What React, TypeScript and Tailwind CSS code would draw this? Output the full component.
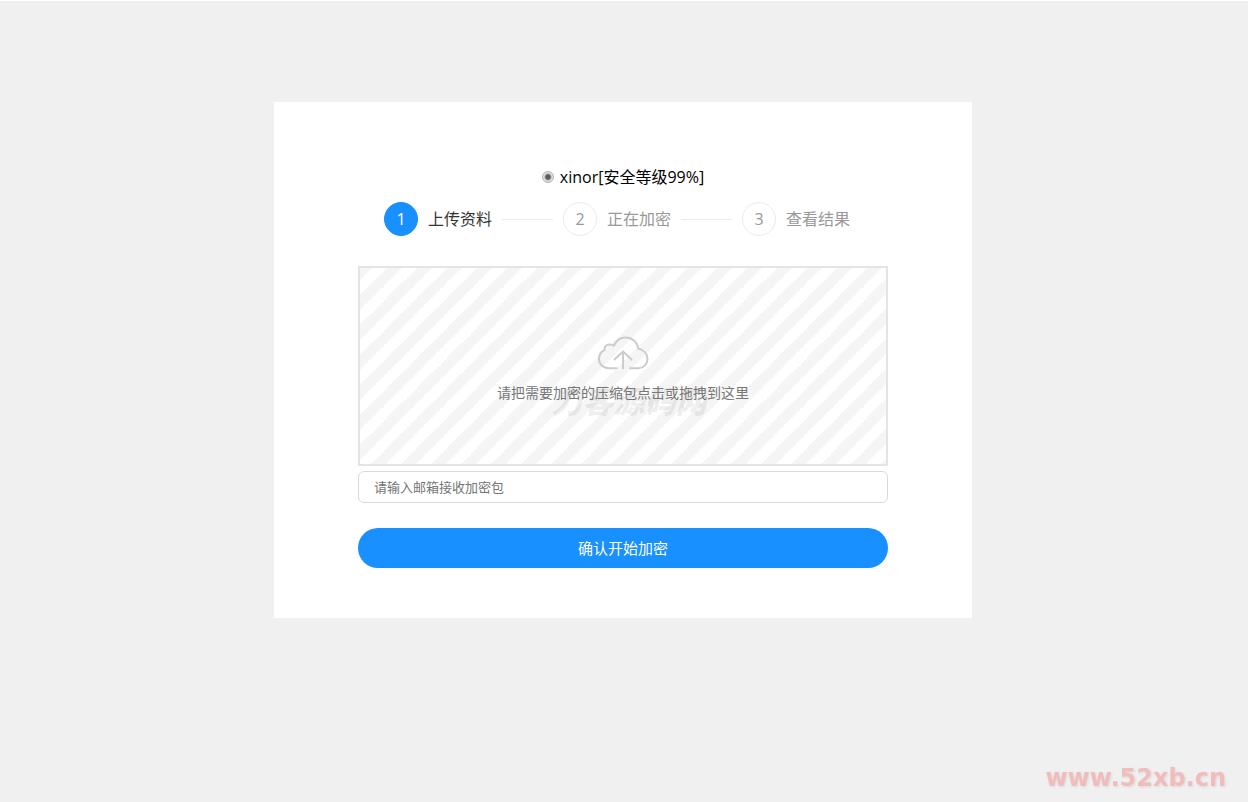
const steps = ['上传资料', '正在加密', '查看结果']

const Step = ({ index, title, active }: { index: number; title: string; active: boolean }) => {
    return (
        <li className="flex items-center gap-2.5">
          <span className={`flex size-[34px] items-center justify-center rounded-full border ${active ? 'border-[#1890ff] bg-[#1890ff] text-white' : 'border-[#ebebeb] bg-white text-[#999999]'}`}>
            {index}
          </span>
          <span className={active ? 'text-[#333333]' : 'text-[#999999]'}>{title}</span>
        </li>
    )
}

const Steps = () => {
    return (
        <ol className="mt-[13px] flex items-center gap-2.5 pl-[26px] pr-[38px]">
          <Step index={1} title={steps[0]} active={true} />
          <li aria-hidden="true" className="h-px flex-1 bg-[#ebebeb]"></li>
          <Step index={2} title={steps[1]} active={false} />
          <li aria-hidden="true" className="h-px flex-1 bg-[#ebebeb]"></li>
          <Step index={3} title={steps[2]} active={false} />
        </ol>
    )
}

const CloudUpload = () => {
    return (
        <svg className="h-[34px] w-[52px]" aria-hidden="true" fill="none" stroke="#cccccc" strokeWidth="2" strokeLinecap="round" strokeLinejoin="round" viewBox="0 0 52 34" xmlns="http://www.w3.org/2000/svg">
          <path d="M19.500 32.200H12C6 32.200 2 28.200 2 23C2 18.600 4.500 15.400 7.500 14C7 10.500 9.500 8.500 12.500 8.500C14.500 8.500 16 9 17 9.800C19 5 23 1.500 28.500 1.500C35 1.500 40.500 6 41 12.500C46.500 13.500 50.500 17.500 50.500 23C50.500 28.500 46.500 32.200 41.500 32.200H33" />
          <path d="M26 32.200V16M17.500 23.500L26 15.500L34.500 23.500" />
        </svg>
    )
}

export default function App() {
    return (
        <main className="min-h-screen border-t border-white bg-[#f0f0f0] pr-0.5 pt-[101px] font-['Open_Sans','Noto_Sans_CJK_SC',sans-serif] text-base">
          <form className="mx-auto w-full max-w-[698px] bg-white px-[84px] pb-[50px] pt-[63px]">
            <label className="flex items-center justify-center gap-1.5 leading-6 text-black">
              <input type="radio" name="level" defaultChecked className="size-3 appearance-none rounded-full border border-[#b0b0b0] bg-[radial-gradient(circle,#5a5a5a_0_2px,#e2e2e2_4px)]" />
              xinor[安全等级99%]
            </label>
            <Steps />
            <button type="button" className="relative mt-[30px] flex h-[200px] w-full flex-col items-center justify-center gap-[11px] border-2 border-[#e4e4e4] bg-[linear-gradient(-45deg,#f5f5f5_25%,transparent_25%,transparent_50%,#f5f5f5_50%,#f5f5f5_75%,transparent_75%)] bg-size-[30px_30px] bg-position-[12px_0] pt-[9px] text-sm text-[#777777]">
              <span aria-hidden="true" className="absolute inset-x-0 top-[109px] pl-3 text-[31px] leading-[48px] font-black italic text-black/8">刀客源码网</span>
              <CloudUpload />
              <span className="relative leading-6">请把需要加密的压缩包点击或拖拽到这里</span>
            </button>
            <input type="email" aria-label="请输入邮箱接收加密包" placeholder="请输入邮箱接收加密包" className="mt-[5px] block h-8 w-full rounded-md border border-[#d9d9d9] px-[15px] text-[13px] placeholder:text-[#757575]" />
            <button type="submit" className="mt-[25px] block h-10 w-full rounded-full bg-[#1890ff] text-[15px] text-white">确认开始加密</button>
          </form>
          <a href="#" className="fixed bottom-2 right-[22px] font-['DejaVu_Sans',sans-serif] text-2xl leading-8 font-bold text-[#f0bcbc] text-shadow-[1px_1px_3px_#00000018]">www.52xb.cn</a>
        </main>
    )
}
